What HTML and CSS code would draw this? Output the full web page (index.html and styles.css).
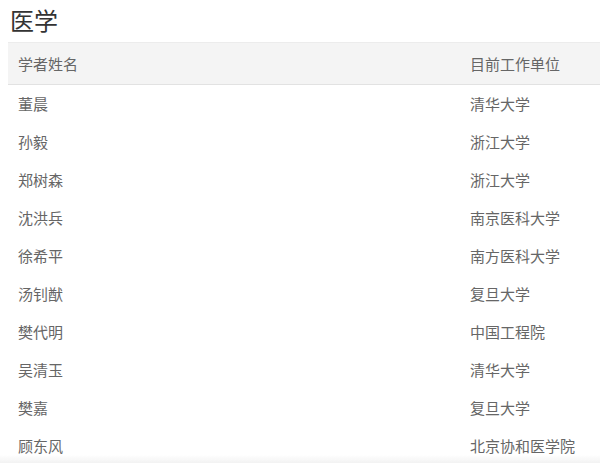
FILE: index.html
```html
<!DOCTYPE html>
<html lang="zh">
<head>
<meta charset="utf-8">
<link rel="stylesheet" href="styles.css">
</head>
<body>
<h2 class="title">医学</h2>
<table class="list">
  <thead>
    <tr><th>学者姓名</th><th class="col2">目前工作单位</th></tr>
  </thead>
  <tbody>
    <tr><td>董晨</td><td class="col2">清华大学</td></tr>
    <tr><td>孙毅</td><td class="col2">浙江大学</td></tr>
    <tr><td>郑树森</td><td class="col2">浙江大学</td></tr>
    <tr><td>沈洪兵</td><td class="col2">南京医科大学</td></tr>
    <tr><td>徐希平</td><td class="col2">南方医科大学</td></tr>
    <tr><td>汤钊猷</td><td class="col2">复旦大学</td></tr>
    <tr><td>樊代明</td><td class="col2">中国工程院</td></tr>
    <tr><td>吴清玉</td><td class="col2">清华大学</td></tr>
    <tr><td>樊嘉</td><td class="col2">复旦大学</td></tr>
    <tr><td>顾东风</td><td class="col2">北京协和医学院</td></tr>
  </tbody>
</table>
<div class="fade"></div>
</body>
</html>
```
FILE: styles.css
```css
html, body {
  margin: 0;
  padding: 0;
  background: #fff;
  overflow: hidden;
}
body {
  font-family: "Noto Sans CJK SC", "Noto Sans", sans-serif;
  color: #666;
}
.title {
  margin: 0;
  padding: 3px 0 0 10px;
  height: 42px;
  box-sizing: border-box;
  font-size: 24px;
  line-height: 34px;
  font-weight: 400;
  color: #333;
}
.list {
  margin-left: 8px;
  width: 620px;
  border-collapse: collapse;
  font-size: 15px;
}
.list th {
  background: #f4f4f4;
  border-top: 1px solid #ececec;
  border-bottom: 1px solid #e2e2e2;
  height: 42px;
  padding: 0 10px;
  text-align: left;
  font-weight: 400;
  color: #666;
  box-sizing: border-box;
}
.list td {
  height: 38px;
  padding: 0 10px 1px;
  text-align: left;
  color: #666;
  box-sizing: border-box;
}
.list .col2 {
  width: 168px;
}
.fade {
  position: fixed;
  left: 0;
  right: 0;
  bottom: 0;
  height: 8px;
  background: linear-gradient(#fff0, #f2f2f2);
}
```
